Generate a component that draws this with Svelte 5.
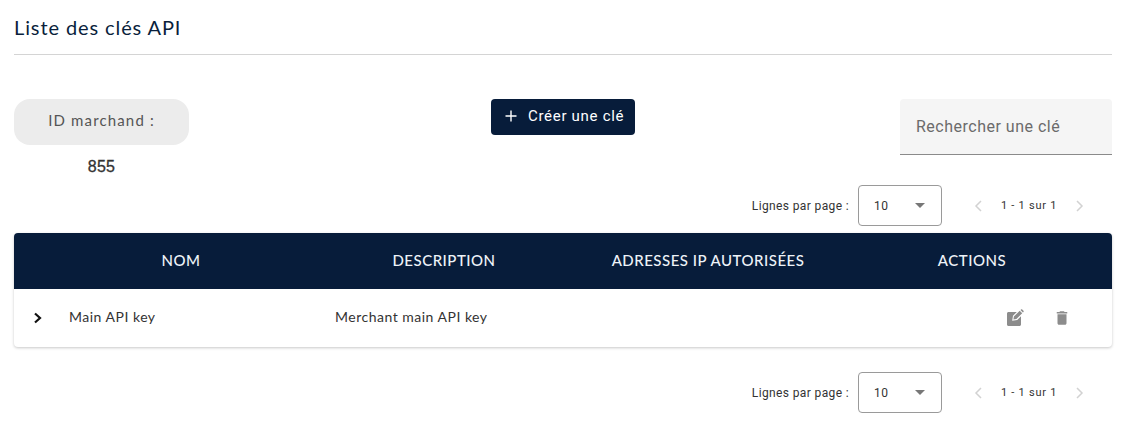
<script>
  const columns = ['', 'Nom', 'Description', 'Adresses IP autorisées', 'Actions']
  const keys = [{ name: 'Main API key', description: 'Merchant main API key' }]
</script>

{#snippet pager()}
  <div class="pager">
    <span class="pager-label">Lignes par page :</span>
    <div class="page-select">
      <span>10</span>
      <span class="caret"></span>
    </div>
    <div class="pager-nav">
      <svg width="10" height="14" viewBox="0 0 10 14" aria-hidden="true"><path d="M8 2 3 7l5 5" /></svg>
      <span class="range">1 - 1 sur 1</span>
      <svg width="10" height="14" viewBox="0 0 10 14" aria-hidden="true"><path d="m2 2 5 5-5 5" /></svg>
    </div>
  </div>
{/snippet}

<main class="page">
  <h1>Liste des clés API</h1>

  <section class="toolbar">
    <div class="merchant">
      <div class="chip">ID marchand :</div>
      <div class="merchant-id">855</div>
    </div>
    <button class="create-btn" type="button">
      <svg width="12" height="12" viewBox="0 0 12 12" aria-hidden="true"><path d="M6 0.5v11M0.5 6h11" /></svg>
      Créer une clé
    </button>
    <div class="search">Rechercher une clé</div>
  </section>

  {@render pager()}

  <table>
    <colgroup>
      <col style="width:41px" />
      <col style="width:252px" />
      <col style="width:274px" />
      <col style="width:254px" />
      <col />
    </colgroup>
    <thead>
      <tr>
        {#each columns as col}
          <th>{col}</th>
        {/each}
      </tr>
    </thead>
    <tbody>
      {#each keys as key}
        <tr>
          <td class="expand">
            <svg width="10" height="12" viewBox="0 0 10 12" aria-hidden="true"><path d="m2 1.500 5 4.500-5 4.500" /></svg>
          </td>
          <td class="name">{key.name}</td>
          <td class="desc">{key.description}</td>
          <td></td>
          <td>
            <div class="actions">
              <svg width="18" height="18" viewBox="0 0 18 18" aria-label="Modifier">
                <path d="M2.500 3h8.300L7 6.800l-.8 5 5-.8L15 7.200v8.300c0 .8-.7 1.500-1.500 1.500h-11c-.8 0-1.500-.7-1.500-1.500v-11C1 3.700 1.700 3 2.500 3z" />
                <path d="M7.400 10.600l.5-3 5.800-5.800 2.500 2.500-5.800 5.800zM14.500 1.100l.6-.6c.3-.3.800-.3 1.100 0l1.300 1.300c.3.3.3.8 0 1.100l-.6.6z" />
              </svg>
              <svg width="18" height="18" viewBox="0 0 24 24" aria-label="Supprimer">
                <path d="M6 19c0 1.100.9 2 2 2h8c1.100 0 2-.9 2-2V7H6v12zM19 4h-3.500l-1-1h-5l-1 1H5v2h14V4z" />
              </svg>
            </div>
          </td>
        </tr>
      {/each}
    </tbody>
  </table>

  <div class="bottom-pager">
    {@render pager()}
  </div>
</main>

<style>
  :global(body) {
    margin: 0;
    background: #fff;
  }

  .page {
    width: 1098px;
    margin-left: 14px;
    font-family: Lato, "Open Sans", sans-serif;
    color: #333;
  }

  h1 {
    margin: 0;
    height: 55px;
    box-sizing: border-box;
    padding-top: 14px;
    font-size: 20px;
    line-height: 26px;
    font-weight: 400;
    letter-spacing: 0.9px;
    color: #0a1f3c;
    border-bottom: 1px solid #d4d4d4;
  }

  .toolbar {
    display: grid;
    grid-template-columns: 477px 409px 212px;
    align-items: start;
    margin-top: 44px;
    height: 86px;
  }

  .merchant { width: 175px; }

  .chip {
    height: 46px;
    line-height: 43px;
    text-align: center;
    border-radius: 16px;
    background: #ececec;
    font-size: 15px;
    letter-spacing: 1.15px;
    color: #555;
  }

  .merchant-id {
    margin-top: 13px;
    text-align: center;
    font-family: "Liberation Sans", sans-serif;
    font-size: 16px;
    line-height: 18px;
    letter-spacing: 0.2px;
    -webkit-text-stroke: 0.3px #333;
    color: #333;
  }

  .create-btn {
    display: flex;
    align-items: center;
    gap: 11px;
    width: 144px;
    height: 36px;
    padding: 0 0 2px 14px;
    border: none;
    border-radius: 4px;
    background: #071c3a;
    color: #fff;
    font-family: Roboto, sans-serif;
    font-size: 15px;
    letter-spacing: 0.7px;
  }

  .create-btn svg path {
    stroke: #fff;
    stroke-width: 1.4;
    fill: none;
  }

  .search {
    height: 56px;
    box-sizing: border-box;
    padding: 18px 16px 0;
    background: #f5f5f5;
    border-bottom: 1px solid #8a8a8a;
    border-radius: 4px 4px 0 0;
    font-family: Roboto, sans-serif;
    font-size: 16px;
    line-height: 19px;
    letter-spacing: 0.5px;
    color: #6b6b6b;
  }

  .pager {
    display: flex;
    align-items: center;
    justify-content: flex-end;
    height: 41px;
    font-family: Roboto, sans-serif;
    font-size: 12px;
    letter-spacing: 0.5px;
    color: #333;
  }

  .pager-label {
    margin-right: 9px;
    letter-spacing: 0.37px;
  }

  .page-select {
    display: flex;
    align-items: center;
    justify-content: space-between;
    width: 84px;
    height: 41px;
    box-sizing: border-box;
    padding: 0 16px 0 15px;
    border: 1px solid #9a9a9a;
    border-radius: 4px;
  }

  .caret {
    width: 0;
    height: 0;
    border-left: 5px solid transparent;
    border-right: 5px solid transparent;
    border-top: 5px solid #777;
  }

  .pager-nav {
    display: flex;
    align-items: center;
    justify-content: space-between;
    width: 112px;
    margin: 0 27px 0 31px;
  }

  .range {
    font-size: 11px;
    letter-spacing: 0.75px;
  }

  .pager-nav svg path {
    fill: none;
    stroke: #d2d2d2;
    stroke-width: 1.5;
  }

  table {
    width: 100%;
    margin-top: 7px;
    border-collapse: separate;
    border-spacing: 0;
    table-layout: fixed;
    border-radius: 4px;
    box-shadow: 0 1px 3px rgba(0, 0, 0, 0.22);
  }

  th {
    box-sizing: border-box;
    height: 56px;
    padding: 0 0 2px;
    background: #071c3a;
    color: #eef3f8;
    font-size: 15px;
    font-weight: 500;
    letter-spacing: 0.5px;
    text-transform: uppercase;
  }

  th:first-child { border-top-left-radius: 4px; }
  th:last-child {
    border-top-right-radius: 4px;
    padding-right: 3px;
  }

  td {
    box-sizing: border-box;
    height: 58px;
    padding: 0 0 4px;
    font-size: 14px;
    font-weight: 400;
    letter-spacing: 0.5px;
    color: #333;
  }

  .expand {
    text-align: center;
    padding: 0 0 0 7px;
  }

  .expand svg path {
    fill: none;
    stroke: #111;
    stroke-width: 2.2;
  }

  .name { padding-left: 14px; }
  .desc { padding-left: 28px; }

  .actions {
    display: flex;
    justify-content: flex-end;
    gap: 29px;
    padding-right: 41px;
    padding-top: 4px;
  }

  .actions svg { fill: #8c8c8c; }

  .bottom-pager { margin-top: 25px; }
</style>
